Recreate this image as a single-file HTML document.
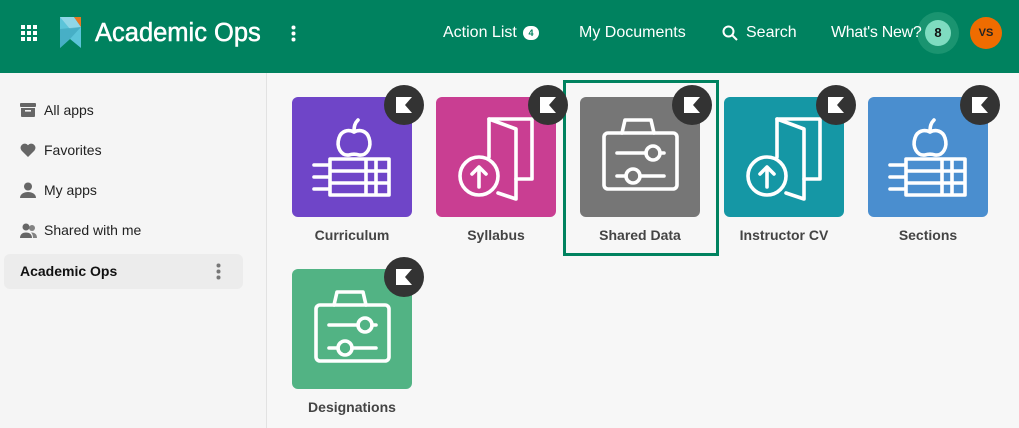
<!DOCTYPE html>
<html><head><style>
*{box-sizing:border-box;margin:0;padding:0}
body{width:1019px;height:428px;overflow:hidden;font-family:"Liberation Sans",Arial,sans-serif;background:#f7f7f7;position:relative}
.hdr{position:absolute;left:0;top:0;width:1019px;height:73px;background:#00825f;color:#fff}
.hdr .t{position:absolute;top:24px;font-size:16px}
.side{position:absolute;left:0;top:73px;width:267px;height:355px;background:#f5f5f5;border-right:1px solid #e2e2e2}
.si{position:absolute;left:44px;font-size:14px;color:#222}
.ic{position:absolute;left:20px}
.tile{position:absolute;width:120px;height:120px;border-radius:6px}
.lbl{position:absolute;width:150px;text-align:center;font-size:14px;font-weight:bold;color:#444}
.bd{position:absolute;width:40px;height:40px;border-radius:50%;background:#333}
.bd svg{position:absolute;left:12px;top:12px}
</style></head><body>
<div class="hdr">
 <svg style="position:absolute;left:21px;top:25px" width="16" height="16" viewBox="0 0 16 16" fill="#fff"><rect x="0" y="0" width="4" height="4"/><rect x="6" y="0" width="4" height="4"/><rect x="12" y="0" width="4" height="4"/><rect x="0" y="6" width="4" height="4"/><rect x="6" y="6" width="4" height="4"/><rect x="12" y="6" width="4" height="4"/><rect x="0" y="12" width="4" height="4"/><rect x="6" y="12" width="4" height="4"/><rect x="12" y="12" width="4" height="4"/></svg>
 <svg style="position:absolute;left:60px;top:17px" width="21" height="31" viewBox="0 0 21 31"><polygon points="0,0 14,0 21,10 21,31 10,22 0,31" fill="#5bc4d9"/><polygon points="0,0 10,12 21,10 14,0" fill="#8fd6e6"/><polygon points="14,0 21,0 21,10" fill="#e87722"/><polygon points="0,12 21,10 10,22 0,31" fill="#3ea6bd" opacity=".7"/></svg>
 <div class="t" style="left:95px;top:19px;font-size:25.5px;-webkit-text-stroke:.5px #fff">Academic Ops</div>
 <svg style="position:absolute;left:291px;top:25px" width="5" height="17" viewBox="0 0 5 17" fill="#fff"><circle cx="2.5" cy="2.5" r="2"/><circle cx="2.5" cy="8.5" r="2"/><circle cx="2.5" cy="14.5" r="2"/></svg>
 <div class="t" style="left:443px">Action List</div>
 <div style="position:absolute;left:523px;top:26px;width:16px;height:14px;border-radius:7px;background:#fff;color:#00825f;font-size:9px;text-align:center;line-height:14px;font-weight:bold">4</div>
 <div class="t" style="left:579px">My Documents</div>
 <svg style="position:absolute;left:722px;top:25px" width="16" height="16" viewBox="0 0 16 16" fill="none" stroke="#fff" stroke-width="2"><circle cx="6.5" cy="6.5" r="5"/><path d="M10.5 10.5l4.5 4.5"/></svg>
 <div class="t" style="left:746px">Search</div>
 <div style="position:absolute;left:917px;top:12px;width:42px;height:42px;border-radius:50%;background:#1a9470"></div>
 <div class="t" style="left:831px;letter-spacing:-.3px">What's New?</div>
 <div style="position:absolute;left:925px;top:20px;width:26px;height:26px;border-radius:50%;background:#7fdcc0;color:#111;font-size:13px;font-weight:bold;text-align:center;line-height:26px">8</div>
 <div style="position:absolute;left:970px;top:17px;width:32px;height:32px;border-radius:50%;background:#ef6c00;color:#222;font-size:11px;font-weight:bold;text-align:center;line-height:32px">VS</div>
</div>
<div class="side">
 <svg class="ic" style="top:30px" width="16" height="14" viewBox="0 0 16 14" fill="#666"><rect x="0" y="0" width="16" height="4" rx="1"/><path d="M1 5h14v8a1 1 0 0 1-1 1H2a1 1 0 0 1-1-1z"/><rect x="5" y="7" width="6" height="1.6" fill="#f5f5f5"/></svg>
 <div class="si" style="top:29px">All apps</div>
 <svg class="ic" style="top:70px" width="16" height="14" viewBox="0 0 16 14" fill="#666"><path d="M8 14L1.5 7.5A4 4 0 0 1 8 2.2 4 4 0 0 1 14.5 7.5z"/></svg>
 <div class="si" style="top:69px">Favorites</div>
 <svg class="ic" style="top:109px" width="16" height="16" viewBox="0 0 16 16" fill="#666"><circle cx="8" cy="4.5" r="4"/><path d="M0 16c0-4 4-6 8-6s8 2 8 6z"/></svg>
 <div class="si" style="top:109px">My apps</div>
 <svg class="ic" style="top:150px" width="17" height="15" viewBox="0 0 17 15" fill="#666"><circle cx="6" cy="4" r="3.5"/><path d="M0 15c0-4 3-5.5 6-5.5s6 1.5 6 5.5z"/><circle cx="12" cy="5" r="3" opacity=".8"/><path d="M13 15c0-3-1-4.5-2-5.5 3 0 6 1 6 5.5z" opacity=".8"/></svg>
 <div class="si" style="top:149px">Shared with me</div>
 <div style="position:absolute;left:4px;top:181px;width:239px;height:35px;border-radius:6px;background:#ececec"></div>
 <div class="si" style="left:20px;top:190px;font-weight:bold;color:#111">Academic Ops</div>
 <svg style="position:absolute;left:216px;top:190px" width="5" height="17" viewBox="0 0 5 17" fill="#777"><circle cx="2.5" cy="2.5" r="2"/><circle cx="2.5" cy="8.5" r="2"/><circle cx="2.5" cy="14.5" r="2"/></svg>
</div>

<div style="position:absolute;left:563px;top:80px;width:156px;height:176px;border:3px solid #00825f"></div>

<div class="tile" style="left:292px;top:97px;background:#6f45c8">
 <svg width="120" height="120" viewBox="0 0 120 120" fill="none" stroke="#fff" stroke-width="3.6" stroke-linecap="round" stroke-linejoin="round"><path d="M57 58c-8 1-13-8-10-17 2-7 9-9 15-6 6-3 13-1 15 6 3 9-2 18-10 17-3-1-7-1-10 0z"/><path d="M62 35c0-6 1-9 4-12"/><path d="M38 62h59v12H38M38 74h59v12H38M38 86h59M38 62v36h59V62M22 68h14M22 80h14M22 92h14M74 62v36M84 62v36"/></svg>
</div>
<div class="tile" style="left:436px;top:97px;background:#c93e92">
 <svg width="120" height="120" viewBox="0 0 120 120" fill="none" stroke="#fff" stroke-width="3.6" stroke-linejoin="round" stroke-linecap="round"><path d="M53 60V22l27 10v70l-18-6"/><path d="M53 22h43v60h-16"/><circle cx="43" cy="79" r="19"/><path d="M43 90V70M36 77l7-7 7 7"/></svg>
</div>
<div class="tile" style="left:580px;top:97px;background:#767676">
 <svg width="120" height="120" viewBox="0 0 120 120" fill="none" stroke="#fff" stroke-width="3.6" stroke-linecap="round" stroke-linejoin="round"><path d="M42 36l3-13h26l3 13"/><rect x="24" y="36" width="73" height="56" rx="4"/><path d="M37 56h29M80 56h4M37 79h9M60 79h24"/><circle cx="73" cy="56" r="7"/><circle cx="53" cy="79" r="7"/></svg>
</div>
<div class="tile" style="left:724px;top:97px;background:#1597a5">
 <svg width="120" height="120" viewBox="0 0 120 120" fill="none" stroke="#fff" stroke-width="3.6" stroke-linejoin="round" stroke-linecap="round"><path d="M53 60V22l27 10v70l-18-6"/><path d="M53 22h43v60h-16"/><circle cx="43" cy="79" r="19"/><path d="M43 90V70M36 77l7-7 7 7"/></svg>
</div>
<div class="tile" style="left:868px;top:97px;background:#4a8ecf">
 <svg width="120" height="120" viewBox="0 0 120 120" fill="none" stroke="#fff" stroke-width="3.6" stroke-linecap="round" stroke-linejoin="round"><path d="M57 58c-8 1-13-8-10-17 2-7 9-9 15-6 6-3 13-1 15 6 3 9-2 18-10 17-3-1-7-1-10 0z"/><path d="M62 35c0-6 1-9 4-12"/><path d="M38 62h59v12H38M38 74h59v12H38M38 86h59M38 62v36h59V62M22 68h14M22 80h14M22 92h14M74 62v36M84 62v36"/></svg>
</div>
<div class="tile" style="left:292px;top:269px;background:#52b384">
 <svg width="120" height="120" viewBox="0 0 120 120" fill="none" stroke="#fff" stroke-width="3.6" stroke-linecap="round" stroke-linejoin="round"><path d="M42 36l3-13h26l3 13"/><rect x="24" y="36" width="73" height="56" rx="4"/><path d="M37 56h29M80 56h4M37 79h9M60 79h24"/><circle cx="73" cy="56" r="7"/><circle cx="53" cy="79" r="7"/></svg>
</div>

<div class="lbl" style="left:277px;top:227px">Curriculum</div>
<div class="lbl" style="left:421px;top:227px">Syllabus</div>
<div class="lbl" style="left:565px;top:227px">Shared Data</div>
<div class="lbl" style="left:709px;top:227px">Instructor CV</div>
<div class="lbl" style="left:853px;top:227px">Sections</div>
<div class="lbl" style="left:277px;top:399px">Designations</div>

<div class="bd" style="left:384px;top:85px"><svg width="16" height="16" viewBox="0 0 16 16"><path d="M0 0h16l-7 8 7 8H0z" fill="#fff"/></svg></div>
<div class="bd" style="left:528px;top:85px"><svg width="16" height="16" viewBox="0 0 16 16"><path d="M0 0h16l-7 8 7 8H0z" fill="#fff"/></svg></div>
<div class="bd" style="left:672px;top:85px"><svg width="16" height="16" viewBox="0 0 16 16"><path d="M0 0h16l-7 8 7 8H0z" fill="#fff"/></svg></div>
<div class="bd" style="left:816px;top:85px"><svg width="16" height="16" viewBox="0 0 16 16"><path d="M0 0h16l-7 8 7 8H0z" fill="#fff"/></svg></div>
<div class="bd" style="left:960px;top:85px"><svg width="16" height="16" viewBox="0 0 16 16"><path d="M0 0h16l-7 8 7 8H0z" fill="#fff"/></svg></div>
<div class="bd" style="left:384px;top:257px"><svg width="16" height="16" viewBox="0 0 16 16"><path d="M0 0h16l-7 8 7 8H0z" fill="#fff"/></svg></div>
</body></html>
